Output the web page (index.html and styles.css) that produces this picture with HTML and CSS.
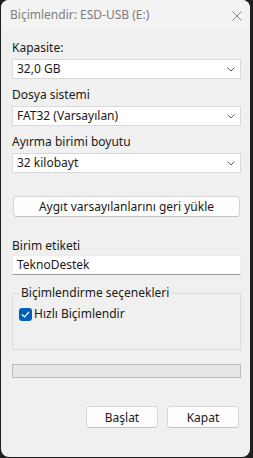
FILE: index.html
```html
<!DOCTYPE html>
<html lang="tr">
<head>
    <meta charset="UTF-8">
    <title>Biçimlendir: ESD-USB (E:)</title>
    <link rel="stylesheet" href="styles.css">
</head>
<body>

    <div class="window">
        <div class="title_bar">
            <span class="title">Biçimlendir: ESD-USB (E:)</span>
            <svg class="close" width="10" height="10" viewBox="0 0 10 10">
                <path d="M0.5 0.5 L9.5 9.5 M9.5 0.5 L0.5 9.5" stroke="#8a8a8a" stroke-width="1" fill="none"/>
            </svg>
        </div>

        <div class="content">
            <p class="label first">Kapasite:</p>
            <div class="select">
                <span>32,0 GB</span>
                <svg width="8" height="5" viewBox="0 0 8 5"><path d="M0.5 0.5 L4 4 L7.5 0.5" stroke="#5f5f5f" fill="none"/></svg>
            </div>

            <p class="label">Dosya sistemi</p>
            <div class="select">
                <span>FAT32 (Varsayılan)</span>
                <svg width="8" height="5" viewBox="0 0 8 5"><path d="M0.5 0.5 L4 4 L7.5 0.5" stroke="#5f5f5f" fill="none"/></svg>
            </div>

            <p class="label">Ayırma birimi boyutu</p>
            <div class="select">
                <span>32 kilobayt</span>
                <svg width="8" height="5" viewBox="0 0 8 5"><path d="M0.5 0.5 L4 4 L7.5 0.5" stroke="#5f5f5f" fill="none"/></svg>
            </div>

            <button class="btn wide">Aygıt varsayılanlarını geri yükle</button>

            <p class="label volume">Birim etiketi</p>
            <div class="textbox">TeknoDestek</div>

            <fieldset class="group">
                <legend>Biçimlendirme seçenekleri</legend>
                <div class="check_row">
                    <span class="check">
                        <svg width="9" height="7" viewBox="0 0 9 7"><path d="M1 3.5 L3.5 6 L8 1" stroke="#fff" stroke-width="1.2" fill="none"/></svg>
                    </span>
                    <span>Hızlı Biçimlendir</span>
                </div>
            </fieldset>

            <div class="progress"></div>

            <div class="actions">
                <button class="btn">Başlat</button>
                <button class="btn">Kapat</button>
            </div>
        </div>
    </div>

</body>
</html>
```

FILE: styles.css
```css
* {
    margin: 0px;
    padding: 0px;
    box-sizing: border-box;
}

body {
    width: 253px;
    height: 458px;
    background-color: #1f1f1f;
    font-family: "Noto Sans", sans-serif;
    font-size: 12px;
    color: #1a1a1a;
    overflow: hidden;
}

.window {
    margin-left: 1px;
    width: 249px;
    height: 457px;
    background-color: #f0f0f0;
    border-radius: 8px;
    overflow: hidden;
}

.title_bar {
    height: 30px;
    background-color: #f3f3f3;
    display: flex;
    align-items: center;
    justify-content: space-between;
    padding: 0 8px 1px 9px;
}

.title {
    color: #7d7d7d;
    line-height: 16px;
}

.close {
    margin-top: 2px;
}

.content {
    padding: 10px 9px 0 11px;
    display: flex;
    flex-direction: column;
}

.label {
    line-height: 16px;
    margin-top: 8px;
    margin-bottom: 3px;
}

.label.first {
    margin-top: 0;
}

.select {
    height: 20px;
    background-color: #fff;
    border: 1px solid #dadada;
    display: flex;
    align-items: center;
    justify-content: space-between;
    padding: 0 5px 0 4px;
    line-height: 16px;
}

.select svg {
    margin-top: 1px;
}

.btn {
    font-family: inherit;
    font-size: 12px;
    color: #1a1a1a;
    height: 22px;
    background-color: #fdfdfd;
    border: 1px solid #d5d5d5;
    border-bottom-color: #c4c4c4;
    border-radius: 4px;
}

.btn.wide {
    margin: 23px 1px 0 1px;
    height: 21px;
}

.label.volume {
    margin-top: 21px;
    margin-bottom: 1px;
}

.textbox {
    height: 20px;
    background-color: #fff;
    border: 1px solid #ececec;
    border-bottom-color: #9a9a9a;
    padding: 0 4px;
    line-height: 18px;
}

.group {
    margin-top: 10px;
    border: 1px solid #dcdcdc;
    padding: 5px 6px 27px 6px;
}

.group legend {
    padding: 0 2px;
    line-height: 16px;
}

.check_row {
    display: flex;
    align-items: center;
    gap: 2px;
    line-height: 16px;
}

.check {
    width: 13px;
    height: 13px;
    background-color: #005fb8;
    border-radius: 3px;
    display: flex;
    align-items: center;
    justify-content: center;
}

.progress {
    margin-top: 14px;
    height: 14px;
    background-color: #e6e6e6;
    border: 1px solid #bcbcbc;
}

.actions {
    margin-top: 28px;
    display: flex;
    justify-content: flex-end;
    gap: 9px;
    padding-right: 2px;
}

.actions .btn {
    width: 72px;
}
```
